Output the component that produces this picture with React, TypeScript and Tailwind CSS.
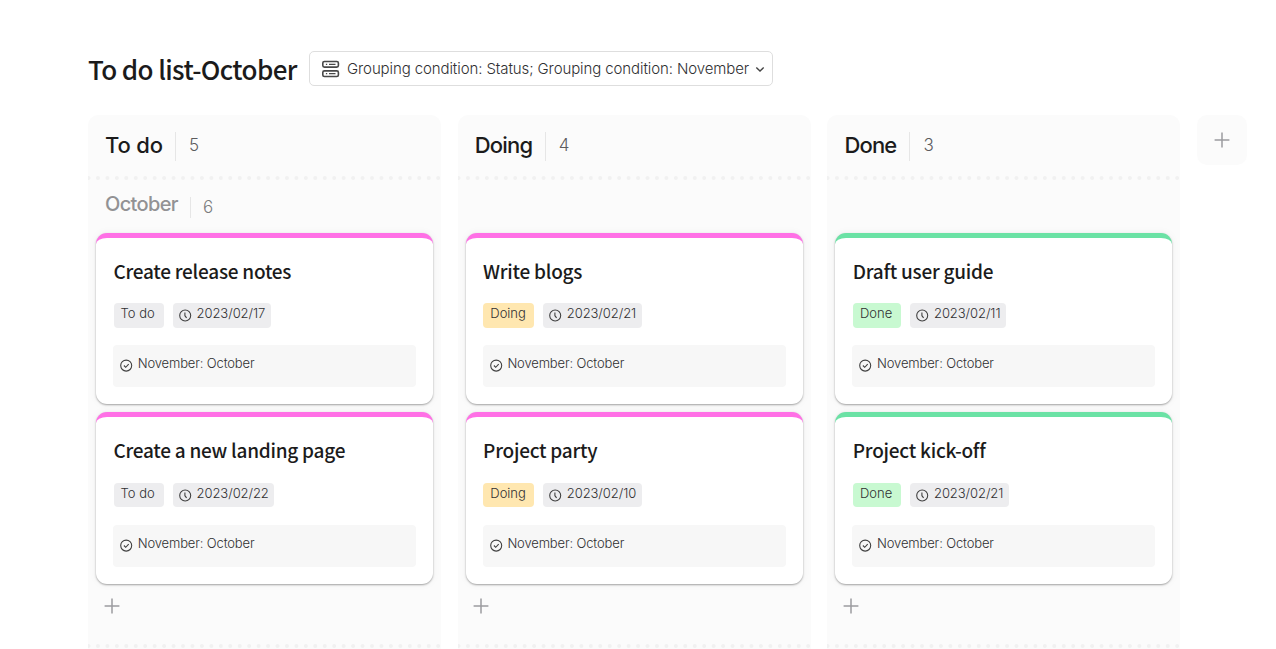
import React from "react";

type CardData = { title: string; date: string };
type Status = "To do" | "Doing" | "Done";
type ColumnData = { status: Status; count: number; cards: CardData[]; group?: { name: string; count: number } };

const columns: ColumnData[] = [
  {
    status: "To do",
    count: 5,
    group: { name: "October", count: 6 },
    cards: [
      { title: "Create release notes", date: "2023/02/17" },
      { title: "Create a new landing page", date: "2023/02/22" },
    ],
  },
  {
    status: "Doing",
    count: 4,
    cards: [
      { title: "Write blogs", date: "2023/02/21" },
      { title: "Project party", date: "2023/02/10" },
    ],
  },
  {
    status: "Done",
    count: 3,
    cards: [
      { title: "Draft user guide", date: "2023/02/11" },
      { title: "Project kick-off", date: "2023/02/21" },
    ],
  },
];

const accent: Record<Status, string> = {
  "To do": "border-[#ff70e6]",
  Doing: "border-[#ff70e6]",
  Done: "border-[#6be2a5]",
};

const tag: Record<Status, string> = {
  "To do": "w-[50px] bg-[#ededef]",
  Doing: "w-[50.5px] bg-[#ffe7b0]",
  Done: "w-[48px] bg-[#c8f9d1]",
};

const heading: Record<Status, string> = {
  "To do": "w-[58px] tracking-[-0.15px]",
  Doing: "w-[58px] tracking-[-0.8px]",
  Done: "w-[53px] tracking-[-0.8px]",
};

function GroupIcon() {
  return (
    <svg className="h-[18px] w-[18px] shrink-0" viewBox="0 0 18 18" fill="none" stroke="#484848" strokeWidth="1.6">
      <rect x="0.8" y="1.5" width="15.6" height="5.6" rx="1.6" />
      <rect x="0.8" y="10.9" width="15.6" height="5.6" rx="1.6" />
      <path d="M3.9 4.3h1.3M7 4.3h6.5M3.9 13.7h1.3M7 13.7h6.5" strokeWidth="1.3" />
    </svg>
  );
}

function Clock() {
  return (
    <svg className="mt-[6px] h-[13px] w-[13px] shrink-0" viewBox="0 0 13 13" fill="none" stroke="#404040" strokeWidth="1.1">
      <circle cx="6.2" cy="6.5" r="5.5" />
      <path d="M5.9 3.6v3.1l1.7 2.1" />
    </svg>
  );
}

function CheckCircle() {
  return (
    <svg className="mt-[14px] h-[13px] w-[13px] shrink-0" viewBox="0 0 13 13" fill="none" stroke="#404040" strokeWidth="1.1">
      <circle cx="6.2" cy="6.6" r="5.5" />
      <path d="M3.9 6.5l1.8 1.8 3-3.1" />
    </svg>
  );
}

function Plus() {
  return (
    <svg className="h-4 w-4" viewBox="0 0 16 16" stroke="#9c9ca0" strokeWidth="1.5">
      <path d="M8 .6v14.8M.6 8h14.8" />
    </svg>
  );
}

function Dots() {
  return (
    <svg className="block h-[5px] w-full shrink-0" viewBox="0 0 353 5">
      <path d="M.5 3H353" stroke="#f1f1f1" strokeWidth="4" strokeLinecap="round" strokeDasharray="0 9.45" />
    </svg>
  );
}

function Card({ card, status }: { card: CardData; status: Status }) {
  return (
    <article
      className={`flex h-[171.5px] flex-col rounded-[11px] border-t-[5px] bg-white px-[17px] shadow-[0_1px_2px_rgba(0,0,0,0.34),0_0_8px_rgba(0,0,0,0.05)] ${accent[status]}`}
    >
      <h3 className="mt-[18px] h-[30px] whitespace-nowrap pl-[0.4px] font-['Noto_Sans_CJK_SC',sans-serif] text-[19px] leading-[30px] font-medium tracking-[-0.25px] text-[#1b1b1b]">
        {card.title}
      </h3>
      <div className="mt-[17.5px] flex h-[24.5px] gap-[9px] pl-[0.6px] text-[13px] leading-[20px] text-[#303032]">
        <span className={`rounded pl-[7px] whitespace-nowrap ${tag[status]}`}>{status}</span>
        <span className="flex rounded bg-[#ededef] pr-[5.5px] pl-[6px]">
          <Clock />
          <span className="ml-[5px] tracking-[-0.07px]">{card.date}</span>
        </span>
      </div>
      <div className="mt-[17.5px] flex h-[42px] rounded bg-[#f7f7f7] pl-[7px] text-[13px] leading-[37px] tracking-[-0.14px] text-[#303032]">
        <CheckCircle />
        <span className="ml-[4.7px]">November: October</span>
      </div>
    </article>
  );
}

function Column({ column }: { column: ColumnData }) {
  return (
    <section className="flex h-[534px] w-[353px] shrink-0 flex-col rounded-t-[10px] bg-[#fbfbfb]">
      <header className="flex h-[60px] items-center pl-[17px]">
        <h2 className={`shrink-0 whitespace-nowrap text-[22px] leading-[60px] font-medium text-[#1b1b1b] ${heading[column.status]}`}>
          {column.status}
        </h2>
        <span className="mt-[3px] ml-[12px] h-[29px] w-px bg-[#e6e6e6]"></span>
        <span className="mt-[1px] ml-[13px] text-[17px] text-[#5c5c5e]">{column.count}</span>
      </header>
      <Dots />
      <div className="flex h-[52.5px] pl-[17px]">
        {column.group && (
          <>
            <span className="w-[73px] text-[20px] leading-[48px] font-medium tracking-[-0.65px] text-[#929294]">{column.group.name}</span>
            <span className="mt-[17px] ml-[12px] h-[21px] w-px bg-[#e6e6e6]"></span>
            <span className="ml-[12px] text-[17px] leading-[54px] text-[#7c7c7e]">{column.group.count}</span>
          </>
        )}
      </div>
      <div className="flex flex-col gap-[8px] px-[8px]">
        {column.cards.map((card) => (
          <Card key={card.title} card={card} status={column.status} />
        ))}
      </div>
      <div className="mt-[14.5px] ml-[15.5px] h-[45px]">
        <Plus />
      </div>
      <Dots />
    </section>
  );
}

export default function App() {
  return (
    <main className="h-[649px] w-[1276px] overflow-hidden bg-white pl-[88px] font-['Inter',sans-serif] font-light">
      <div className="flex h-[115px] pt-[51px]">
        <h1 className="w-[221px] shrink-0 whitespace-nowrap font-['Noto_Sans_CJK_SC',sans-serif] text-[26px] leading-[35px] font-medium tracking-[-0.63px] text-[#1b1b1b]">
          To do list-October
        </h1>
        <div className="flex h-[35px] w-[464px] items-center rounded-[5px] border border-[#dedede] pl-[12px] text-[15px] text-[#303032]">
          <GroupIcon />
          <span className="mt-[1px] ml-[7px] whitespace-nowrap tracking-[-0.1px]">
            Grouping condition: Status; Grouping condition: November
          </span>
          <svg className="ml-[6px] h-[10px] w-[10px] shrink-0" viewBox="0 0 10 10" fill="none" stroke="#444" strokeWidth="1.4">
            <path d="M1.3 3.5L5 7l3.7-3.5" />
          </svg>
        </div>
      </div>
      <div className="flex gap-[16.7px]">
        {columns.map((column) => (
          <Column key={column.status} column={column} />
        ))}
        <div className="flex h-[50px] w-[50px] shrink-0 items-center justify-center rounded-[10px] bg-[#fbfbfb]">
          <Plus />
        </div>
      </div>
    </main>
  );
}
